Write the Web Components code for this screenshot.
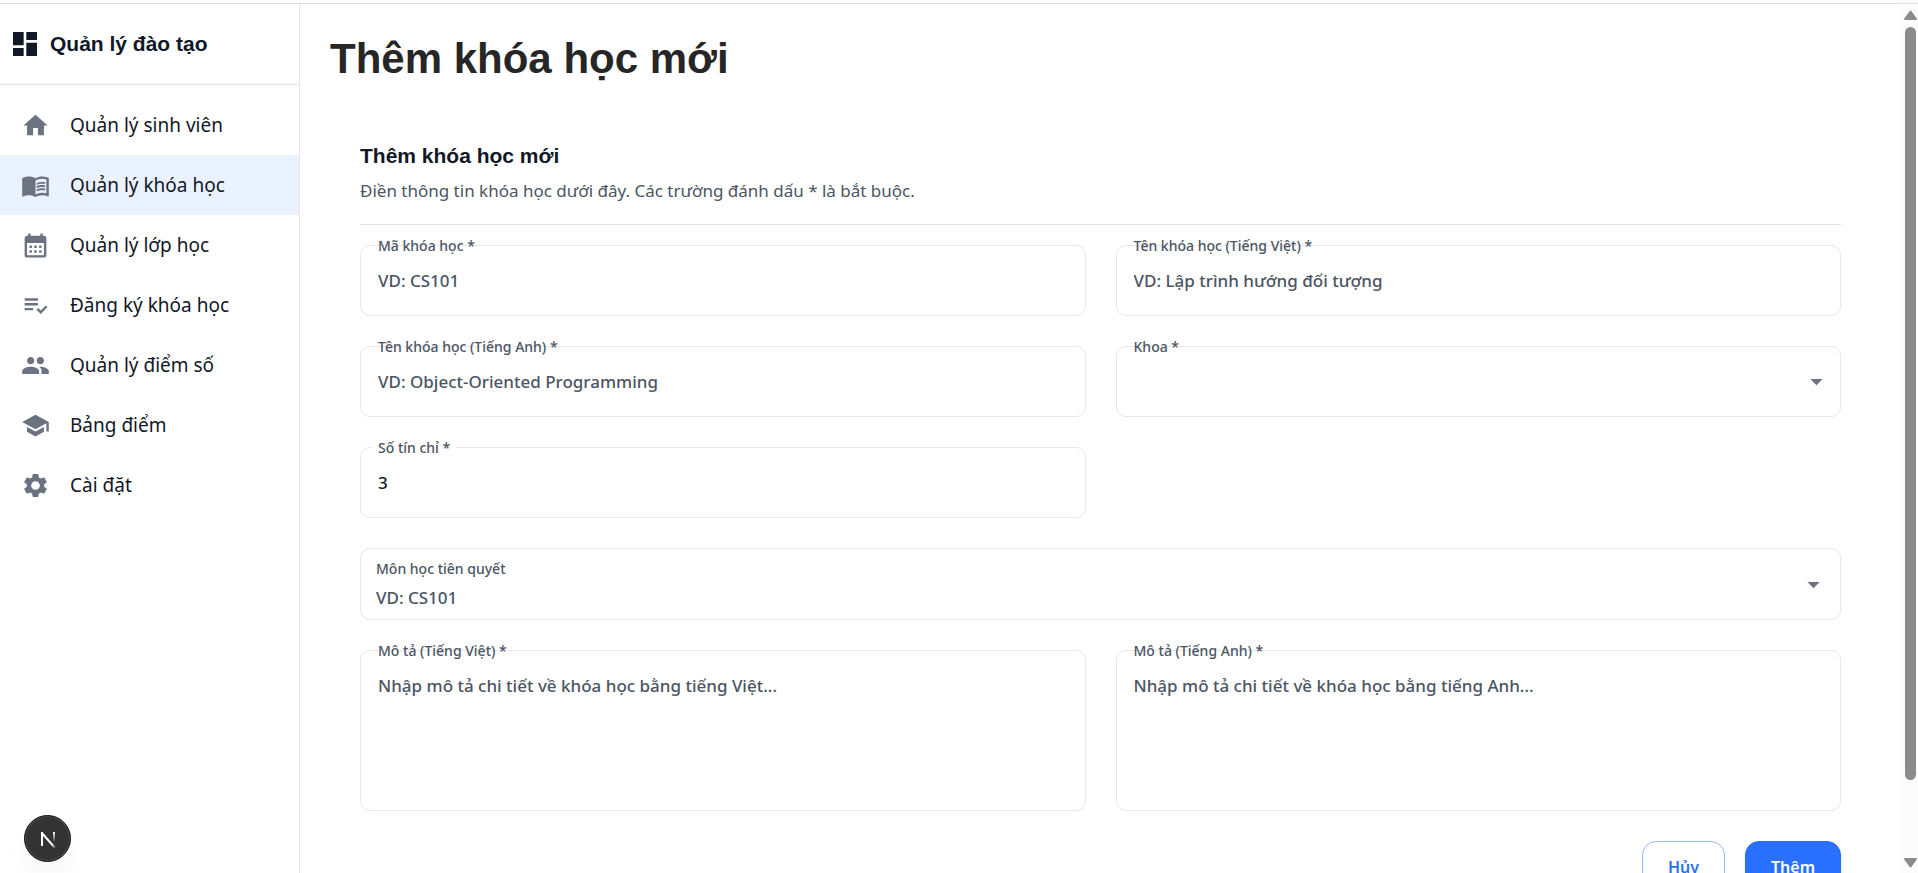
<!DOCTYPE html>
<html lang="vi">
<head>
<meta charset="utf-8">
<meta name="viewport" content="width=device-width, initial-scale=1">
<title>Thêm khóa học mới</title>
<style>
  html { height: 100%; }
  body {
    --heading: "Liberation Sans", Arial, sans-serif;
    --ink: #111827;
    --muted: #4b5563;
    --icon: #6b7280;
    --line: #e5e7eb;
    --rule: #dfe3ea;
    --accent: #2970ff;
    margin: 0;
    height: 100%;
    overflow: hidden;
    background: #fff;
    color: var(--ink);
    font: 400 17px/24px "Noto Sans", "Open Sans", sans-serif;
  }
</style>
</head>
<body>
<app-shell>
  <side-nav slot="nav" heading="Quản lý đào tạo">
    <nav-item icon="home">Quản lý sinh viên</nav-item>
    <nav-item icon="book" active>Quản lý khóa học</nav-item>
    <nav-item icon="calendar">Quản lý lớp học</nav-item>
    <nav-item icon="check">Đăng ký khóa học</nav-item>
    <nav-item icon="people">Quản lý điểm số</nav-item>
    <nav-item icon="school">Bảng điểm</nav-item>
    <nav-item icon="settings">Cài đặt</nav-item>
  </side-nav>
  <page-heading>Thêm khóa học mới</page-heading>
  <form-card>
    <span slot="title">Thêm khóa học mới</span>
    <span slot="note">Điền thông tin khóa học dưới đây. Các trường đánh dấu * là bắt buộc.</span>
    <text-field label="Mã khóa học *" placeholder="VD: CS101"></text-field>
    <text-field label="Tên khóa học (Tiếng Việt) *" placeholder="VD: Lập trình hướng đối tượng"></text-field>
    <text-field label="Tên khóa học (Tiếng Anh) *" placeholder="VD: Object-Oriented Programming"></text-field>
    <select-field label="Khoa *"></select-field>
    <text-field label="Số tín chỉ *" value="3" notched></text-field>
    <combo-field label="Môn học tiên quyết" placeholder="VD: CS101"></combo-field>
    <area-field label="Mô tả (Tiếng Việt) *" placeholder="Nhập mô tả chi tiết về khóa học bằng tiếng Việt..."></area-field>
    <area-field label="Mô tả (Tiếng Anh) *" placeholder="Nhập mô tả chi tiết về khóa học bằng tiếng Anh..."></area-field>
    <action-button slot="actions">Hủy</action-button>
    <action-button slot="actions" primary>Thêm</action-button>
  </form-card>
  <scroll-rail slot="rail"></scroll-rail>
</app-shell>
<dev-badge></dev-badge>

<script>
const ICONS = {
  dashboard: 'M3 13h8V3H3v10zm0 8h8v-6H3v6zm10 0h8V11h-8v10zm0-18v6h8V3h-8z',
  home: 'M10 20v-6h4v6h5v-8h3L12 3 2 12h3v8z',
  book: 'M21 5c-1.11-.35-2.33-.5-3.5-.5-1.95 0-4.05.4-5.5 1.5-1.45-1.1-3.55-1.5-5.5-1.5S2.45 4.9 1 6v14.65c0 .25.25.5.5.5.1 0 .15-.05.25-.05C3.1 20.45 5.05 20 6.5 20c1.95 0 4.05.4 5.5 1.5 1.35-.85 3.8-1.5 5.5-1.5 1.65 0 3.35.3 4.75 1.05.1.05.15.05.25.05.25 0 .5-.25.5-.5V6c-.6-.45-1.25-.75-2-1zm0 13.5c-1.1-.35-2.3-.5-3.5-.5-1.7 0-4.15.65-5.5 1.5V8c1.35-.85 3.8-1.5 5.5-1.5 1.2 0 2.4.15 3.5.5v11.5zM17.5 10.5c.88 0 1.73.09 2.5.26V9.24c-.79-.15-1.64-.24-2.5-.24-1.7 0-3.24.29-4.5.83v1.66c1.13-.64 2.7-.99 4.5-.99zM13 12.49v1.66c1.13-.64 2.7-.99 4.5-.99.88 0 1.73.09 2.5.26V11.9c-.79-.15-1.64-.24-2.5-.24-1.7 0-3.24.3-4.5.83zm4.5 1.84c-1.7 0-3.24.29-4.5.83v1.66c1.13-.64 2.7-.99 4.5-.99.88 0 1.73.09 2.5.26v-1.52c-.79-.16-1.64-.24-2.5-.24z',
  calendar: 'M19 4h-1V2h-2v2H8V2H6v2H5c-1.11 0-1.99.9-1.99 2L3 20c0 1.1.89 2 2 2h14c1.1 0 2-.9 2-2V6c0-1.1-.9-2-2-2zm0 16H5V10h14v10zM9 14H7v-2h2v2zm4 0h-2v-2h2v2zm4 0h-2v-2h2v2zm-8 4H7v-2h2v2zm4 0h-2v-2h2v2zm4 0h-2v-2h2v2z',
  check: 'M3 10h11v2H3zm0-4h11v2H3zm0 8h7v2H3zm17.59-2.07-4.25 4.24-2.12-2.12-1.41 1.41L16.34 19 22 13.34z',
  people: 'M16 11c1.66 0 2.99-1.34 2.99-3S17.66 5 16 5c-1.66 0-3 1.34-3 3s1.34 3 3 3zm-8 0c1.66 0 2.99-1.34 2.99-3S9.66 5 8 5C6.34 5 5 6.34 5 8s1.34 3 3 3zm0 2c-2.33 0-7 1.17-7 3.5V19h14v-2.5c0-2.33-4.67-3.5-7-3.5zm8 0c-.29 0-.62.02-.97.05 1.16.84 1.97 1.97 1.97 3.45V19h6v-2.5c0-2.33-4.67-3.5-7-3.5z',
  school: 'M5 13.18v4L12 21l7-3.82v-4L12 17l-7-3.82zM12 3 1 9l11 6 9-4.91V17h2V9L12 3z',
  settings: 'M19.14 12.94c.04-.3.06-.61.06-.94 0-.32-.02-.64-.07-.94l2.03-1.58c.18-.14.23-.41.12-.61l-1.92-3.32c-.12-.22-.37-.29-.59-.22l-2.39.96c-.5-.38-1.03-.7-1.62-.94l-.36-2.54c-.04-.24-.24-.41-.48-.41h-3.84c-.24 0-.43.17-.47.41l-.36 2.54c-.59.24-1.13.57-1.62.94l-2.39-.96c-.22-.08-.47 0-.59.22L2.74 8.87c-.12.21-.08.47.12.61l2.03 1.58c-.05.3-.09.63-.09.94s.02.64.07.94l-2.03 1.58c-.18.14-.23.41-.12.61l1.92 3.32c.12.22.37.29.59.22l2.39-.96c.5.38 1.03.7 1.62.94l.36 2.54c.05.24.24.41.48.41h3.84c.24 0 .44-.17.47-.41l.36-2.54c.59-.24 1.13-.56 1.62-.94l2.39.96c.22.08.47 0 .59-.22l1.92-3.32c.12-.22.07-.47-.12-.61l-2.01-1.58zM12 15.6c-1.98 0-3.6-1.62-3.6-3.6s1.62-3.6 3.6-3.6 3.6 1.62 3.6 3.6-1.62 3.6-3.6 3.6z',
  caret: 'M7 10l5 5 5-5z'
};
const icon = (name, size) =>
  `<svg width="${size}" height="${size}" viewBox="0 0 24 24" fill="currentColor" aria-hidden="true"><path d="${ICONS[name]}"/></svg>`;

/* Registers an element whose shadow root is rendered once from its attributes. */
const define = (name, render) => customElements.define(name, class extends HTMLElement {
  connectedCallback() {
    if (this.shadowRoot) return;
    this.attachShadow({ mode: 'open' }).innerHTML = render(this);
  }
});
const attr = (el, name) => el.getAttribute(name) || '';

define('app-shell', () => `
  <style>
    :host { display: flex; flex-direction: column; height: 100vh; padding-top: 3px; box-sizing: border-box; overflow: hidden; }
    .body { flex: 1; min-height: 0; display: flex; border-top: 1px solid #dddfe3; }
    main { flex: 1; min-width: 0; overflow: hidden; padding: 29px 30px; box-sizing: border-box; }
  </style>
  <div class="body">
    <slot name="nav"></slot>
    <main><slot></slot></main>
    <slot name="rail"></slot>
  </div>`);

define('side-nav', el => `
  <style>
    :host { display: block; flex: none; width: 300px; box-sizing: border-box; border-right: 1px solid var(--line); }
    header { display: flex; align-items: center; gap: 9px; height: 80px; padding-left: 9px; border-bottom: 1px solid var(--rule); font: 700 21px/28px var(--heading); }
    svg { display: block; }
    nav { padding-top: 10px; }
  </style>
  <header>${icon('dashboard', 32)}<span>${attr(el, 'heading')}</span></header>
  <nav><slot></slot></nav>`);

define('nav-item', el => `
  <style>
    :host { display: block; }
    a { display: flex; align-items: center; gap: 20px; height: 60px; padding-left: 21px; color: inherit; text-decoration: none; font-size: 19px; line-height: 28px; }
    :host([active]) a { background: #ebf2ff; }
    svg { display: block; color: var(--icon); }
  </style>
  <a href="#">${icon(attr(el, 'icon'), 29)}<span><slot></slot></span></a>`);

define('page-heading', () => `
  <style>
    :host { display: block; }
    h1 { margin: 0 0 29px; color: #262626; font: 700 42px/52px var(--heading); }
  </style>
  <h1><slot></slot></h1>`);

define('form-card', () => `
  <style>
    :host { display: block; border-radius: 16px; box-shadow: inset 0 0 0 1px #fcfcfc; padding: 30px; }
    h2 { margin: 0 0 10px; font: 700 21px/24px var(--heading); }
    p { margin: 0; line-height: 26px; color: var(--muted); }
    hr { margin: 20px 0; border: 0; border-top: 1px solid var(--rule); }
    .grid { display: grid; grid-template-columns: 1fr 1fr; gap: 30px; }
    ::slotted(combo-field) { grid-column: 1 / -1; }
    .actions { display: flex; justify-content: flex-end; gap: 20px; margin-top: 30px; }
  </style>
  <form>
    <h2><slot name="title"></slot></h2>
    <p><slot name="note"></slot></p>
    <hr>
    <div class="grid"><slot></slot></div>
    <div class="actions"><slot name="actions"></slot></div>
  </form>`);

/* Outlined box and floating label shared by every kind of field. */
const FIELD = `
  :host { display: block; position: relative; height: 71px; min-width: 0; }
  input, select, textarea {
    display: block; box-sizing: border-box; width: 100%; height: 100%; margin: 0; padding: 0 17px;
    border: 1px solid var(--line); border-radius: 10px; background: #fff; color: var(--ink);
    font: 500 17px/24px "Noto Sans", sans-serif; outline: none; resize: none; appearance: none;
  }
  ::placeholder { color: var(--muted); opacity: 1; }
  label { color: var(--muted); font-size: 14px; font-weight: 500; line-height: 20px; }
  label.float { position: absolute; left: 12px; top: -9px; padding: 0 6px; }
  svg { display: block; color: var(--icon); }`;

define('text-field', el => `
  <style>${FIELD}
    :host([notched]) label { background: #fff; }
  </style>
  <input id="f" type="text" placeholder="${attr(el, 'placeholder')}" value="${attr(el, 'value')}">
  <label class="float" for="f">${attr(el, 'label')}</label>`);

define('select-field', el => `
  <style>${FIELD}
    svg { position: absolute; right: 10px; top: 21px; pointer-events: none; }
  </style>
  <select id="f"><option value=""></option></select>
  <label class="float" for="f">${attr(el, 'label')}</label>
  ${icon('caret', 29)}`);

define('area-field', el => `
  <style>${FIELD}
    :host { height: 161px; }
    textarea { padding-top: 23px; }
  </style>
  <textarea id="f" placeholder="${attr(el, 'placeholder')}"></textarea>
  <label class="float" for="f">${attr(el, 'label')}</label>`);

define('combo-field', el => `
  <style>${FIELD}
    :host { display: flex; align-items: center; height: 72px; box-sizing: border-box; padding: 0 12px 0 15px; border: 1px solid var(--line); border-radius: 10px; }
    .text { flex: 1; display: flex; flex-direction: column; gap: 7px; }
    input { height: 24px; padding: 0; border: 0; border-radius: 0; }
    button { display: block; padding: 0; border: 0; background: none; }
  </style>
  <div class="text">
    <label for="f">${attr(el, 'label')}</label>
    <input id="f" type="text" role="combobox" aria-expanded="false" placeholder="${attr(el, 'placeholder')}">
  </div>
  <button type="button" aria-label="Mở">${icon('caret', 29)}</button>`);

define('action-button', () => `
  <style>
    :host { display: block; }
    button { height: 52px; padding: 0 25px; border: 1px solid #94b8ff; border-radius: 14px; background: #fff; color: var(--accent); font: 600 16px/24px "Noto Sans", sans-serif; }
    :host([primary]) button { border-color: var(--accent); background: var(--accent); color: #fff; box-shadow: 0 1px 3px rgba(0, 0, 0, .1); }
  </style>
  <button type="button"><slot></slot></button>`);

define('scroll-rail', () => `
  <style>
    :host { display: flex; flex: none; flex-direction: column; align-items: center; gap: 7px; width: 17px; box-sizing: border-box; padding: 6px 0 5px 2px; background: #fcfcfc; }
    svg { display: block; flex: none; fill: #8b8b8b; stroke: #8b8b8b; stroke-width: 2; stroke-linejoin: round; }
    .track { flex: 1; width: 11px; display: grid; grid-template-rows: 32fr 3fr; }
    .thumb { border-radius: 6px; background: #8b8b8b; }
  </style>
  <svg width="13" height="10" viewBox="0 0 13 10"><path d="M6.5 1.5 12 9H1z"/></svg>
  <div class="track"><div class="thumb"></div></div>
  <svg width="13" height="10" viewBox="0 0 13 10"><path d="M6.5 8.500 12 1H1z"/></svg>`);

define('dev-badge', () => `
  <style>
    :host { display: block; position: fixed; left: 24px; bottom: 11px; }
    button { display: grid; place-items: center; width: 47px; height: 47px; padding: 0; border: 1px solid #111; border-radius: 50%; background: #333; box-shadow: inset 0 0 0 1px #4d4d4d, 0 16px 32px -8px rgba(0, 0, 0, .08); }
    svg { display: block; }
  </style>
  <button type="button" aria-label="Next.js">
    <svg width="18" height="18" viewBox="0 0 18 18" fill="none" stroke-width="2">
      <defs>
        <linearGradient id="d" gradientUnits="userSpaceOnUse" x1="10" y1="10" x2="17" y2="18"><stop stop-color="#fff"/><stop offset=".5" stop-color="#fff"/><stop offset="1" stop-color="#fff" stop-opacity="0"/></linearGradient>
        <linearGradient id="s" gradientUnits="userSpaceOnUse" x1="0" y1="2" x2="0" y2="12"><stop stop-color="#fff"/><stop offset="1" stop-color="#fff" stop-opacity="0"/></linearGradient>
      </defs>
      <path stroke="#fff" d="M3 16V2"/>
      <path stroke="url(#d)" d="M2.500 2.500 16 18"/>
      <path stroke="url(#s)" d="M15 2v11"/>
    </svg>
  </button>`);
</script>
</body>
</html>
